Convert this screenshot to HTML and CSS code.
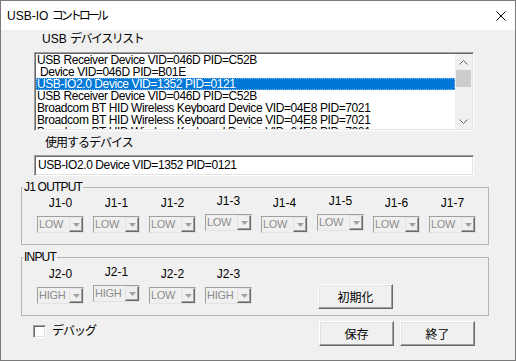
FILE: index.html
```html
<!DOCTYPE html>
<html lang="ja">
<head>
    <meta charset="UTF-8">
    <title>USB-IO コントロール</title>
    <link rel="stylesheet" href="styles.css">
</head>
<body>
    <div class="window">
        <div class="titlebar">
            <span class="title">USB-IO <span class="kana">コントロール</span></span>
            <svg class="close" width="10" height="10" viewBox="0 0 10 10">
                <path d="M0.5 0.5 L9.5 9.5 M9.5 0.5 L0.5 9.5" stroke="#000" stroke-width="1" fill="none"/>
            </svg>
        </div>

        <div class="client">
            <div class="caption caption-list">USB <span class="kana">デバイスリスト</span></div>
            <div class="listbox">
                <ul class="items">
                    <li>USB Receiver Device VID=046D PID=C52B</li>
                    <li>&nbsp;Device VID=046D PID=B01E</li>
                    <li class="selected">USB-IO2.0 Device VID=1352 PID=0121</li>
                    <li>USB Receiver Device VID=046D PID=C52B</li>
                    <li>Broadcom BT HID Wireless Keyboard Device VID=04E8 PID=7021</li>
                    <li>Broadcom BT HID Wireless Keyboard Device VID=04E8 PID=7021</li>
                    <li>Broadcom BT HID Wireless Keyboard Device VID=04E8 PID=7021</li>
                </ul>
                <div class="scrollbar">
                    <span class="arrow">
                        <svg width="9" height="5" viewBox="0 0 9 5"><path d="M0.5 4.5 L4.5 0.5 L8.5 4.5" stroke="#606060" fill="none"/></svg>
                    </span>
                    <span class="thumb"></span>
                    <span class="track"></span>
                    <span class="arrow">
                        <svg width="9" height="5" viewBox="0 0 9 5"><path d="M0.5 0.5 L4.5 4.5 L8.5 0.5" stroke="#606060" fill="none"/></svg>
                    </span>
                </div>
            </div>

            <div class="caption caption-device kana">使用するデバイス</div>
            <div class="textbox">USB-IO2.0 Device VID=1352 PID=0121</div>

            <fieldset class="group group-output">
                <legend>J1 OUTPUT</legend>
                <div class="ports">
                    <div class="port"><span class="port-name">J1-0</span><div class="combo"><span class="combo-value">LOW</span><span class="combo-btn"><svg width="7" height="4" viewBox="0 0 7 4"><path d="M0 0 H7 L3.5 4 Z" fill="#a0a0a0"/></svg></span></div></div>
                    <div class="port"><span class="port-name">J1-1</span><div class="combo"><span class="combo-value">LOW</span><span class="combo-btn"><svg width="7" height="4" viewBox="0 0 7 4"><path d="M0 0 H7 L3.5 4 Z" fill="#a0a0a0"/></svg></span></div></div>
                    <div class="port"><span class="port-name">J1-2</span><div class="combo"><span class="combo-value">LOW</span><span class="combo-btn"><svg width="7" height="4" viewBox="0 0 7 4"><path d="M0 0 H7 L3.5 4 Z" fill="#a0a0a0"/></svg></span></div></div>
                    <div class="port raised"><span class="port-name">J1-3</span><div class="combo"><span class="combo-value">LOW</span><span class="combo-btn"><svg width="7" height="4" viewBox="0 0 7 4"><path d="M0 0 H7 L3.5 4 Z" fill="#a0a0a0"/></svg></span></div></div>
                    <div class="port"><span class="port-name">J1-4</span><div class="combo"><span class="combo-value">LOW</span><span class="combo-btn"><svg width="7" height="4" viewBox="0 0 7 4"><path d="M0 0 H7 L3.5 4 Z" fill="#a0a0a0"/></svg></span></div></div>
                    <div class="port raised"><span class="port-name">J1-5</span><div class="combo"><span class="combo-value">LOW</span><span class="combo-btn"><svg width="7" height="4" viewBox="0 0 7 4"><path d="M0 0 H7 L3.5 4 Z" fill="#a0a0a0"/></svg></span></div></div>
                    <div class="port"><span class="port-name">J1-6</span><div class="combo"><span class="combo-value">LOW</span><span class="combo-btn"><svg width="7" height="4" viewBox="0 0 7 4"><path d="M0 0 H7 L3.5 4 Z" fill="#a0a0a0"/></svg></span></div></div>
                    <div class="port"><span class="port-name">J1-7</span><div class="combo"><span class="combo-value">LOW</span><span class="combo-btn"><svg width="7" height="4" viewBox="0 0 7 4"><path d="M0 0 H7 L3.5 4 Z" fill="#a0a0a0"/></svg></span></div></div>
                </div>
            </fieldset>

            <fieldset class="group group-input">
                <legend>INPUT</legend>
                <div class="ports">
                    <div class="port"><span class="port-name">J2-0</span><div class="combo"><span class="combo-value">HIGH</span><span class="combo-btn"><svg width="7" height="4" viewBox="0 0 7 4"><path d="M0 0 H7 L3.5 4 Z" fill="#a0a0a0"/></svg></span></div></div>
                    <div class="port raised"><span class="port-name">J2-1</span><div class="combo"><span class="combo-value">HIGH</span><span class="combo-btn"><svg width="7" height="4" viewBox="0 0 7 4"><path d="M0 0 H7 L3.5 4 Z" fill="#a0a0a0"/></svg></span></div></div>
                    <div class="port"><span class="port-name">J2-2</span><div class="combo"><span class="combo-value">LOW</span><span class="combo-btn"><svg width="7" height="4" viewBox="0 0 7 4"><path d="M0 0 H7 L3.5 4 Z" fill="#a0a0a0"/></svg></span></div></div>
                    <div class="port"><span class="port-name">J2-3</span><div class="combo"><span class="combo-value">HIGH</span><span class="combo-btn"><svg width="7" height="4" viewBox="0 0 7 4"><path d="M0 0 H7 L3.5 4 Z" fill="#a0a0a0"/></svg></span></div></div>
                    <button class="btn btn-reset">初期化</button>
                </div>
            </fieldset>

            <div class="footer">
                <label class="check"><span class="box"></span><span class="kana">デバッグ</span></label>
                <div class="actions">
                    <button class="btn">保存</button>
                    <button class="btn">終了</button>
                </div>
            </div>
        </div>
    </div>
</body>
</html>
```

FILE: styles.css
```css
body {
    margin: 0;
    font-family: "Liberation Sans", "Noto Sans CJK JP", sans-serif;
    font-size: 12px;
    color: #000;
    background: #fff;
}
/* the dialog font has narrow kana, Noto's are full width */
.kana { letter-spacing: -1.5px; }
.window {
    width: 516px;
    height: 361px;
    box-sizing: border-box;
    border: 1px solid #7a7a7a;
    background: #f0f0f0;
    display: flex;
    flex-direction: column;
}
.titlebar {
    height: 29px;
    flex-shrink: 0;
    background: #fff;
    display: flex;
    align-items: center;
    padding-left: 6px;
    line-height: 14px;
}
.title .kana { letter-spacing: -3px; }
.close {
    margin-left: auto;
    margin-right: 9px;
}
.client {
    display: flex;
    flex-direction: column;
    align-items: flex-start;
}
.caption {
    line-height: 14px;
}
.caption-list { margin: 2px 0 0 41px; }
.caption-device { margin: 5px 0 0 44px; letter-spacing: -1px; }

/* sunken controls */
.listbox,
.textbox {
    box-sizing: border-box;
    width: 440px;
    margin-left: 33px;
    background: #fff;
    border: 1px solid;
    border-color: #a0a0a0 #fff #fff #a0a0a0;
    box-shadow: inset 1px 1px 0 #696969, inset -1px -1px 0 #e3e3e3;
    letter-spacing: -0.4px;
}
.listbox {
    height: 79px;
    margin-top: 6px;
    padding: 1px;
    display: flex;
    overflow: hidden;
}
.items {
    list-style: none;
    margin: 0;
    padding: 0;
    flex: 1;
    overflow: hidden;
}
.items li {
    height: 12px;
    line-height: 12px;
    padding-left: 1px;
    white-space: nowrap;
    overflow: hidden;
}
.items li.selected {
    background: #0078d7;
    color: #fff;
    outline: 1px dotted #7fb4ea;
    outline-offset: -1px;
}
.scrollbar {
    width: 17px;
    display: flex;
    flex-direction: column;
    background: #f0f0f0;
}
.arrow {
    height: 16px;
    display: flex;
    align-items: center;
    justify-content: center;
}
.thumb {
    height: 17px;
    background: #cdcdcd;
    margin: 0 1px;
}
.track { flex: 1; }

.textbox {
    height: 21px;
    margin-top: 5px;
    padding: 2px 3px;
    line-height: 15px;
}

/* group boxes */
.group {
    box-sizing: border-box;
    width: 468px;
    margin: 0 0 0 20px;
    padding: 0;
    border: 1px solid #b4b4b4;
    min-width: 0;
}
.group legend {
    margin-left: 1px;
    padding: 0 1px;
    line-height: 14px;
    letter-spacing: -0.8px;
}
.group-output { margin-top: 4px; }
.group-output .ports { padding: 2px 0 11px 15px; }
.group-input { margin-top: 5px; }
.group-input .ports { padding: 3px 0 6px 15px; }

.ports {
    display: flex;
    align-items: flex-start;
    gap: 9px;
}
.port {
    width: 47px;
    display: flex;
    flex-direction: column;
    align-items: center;
    gap: 6px;
}
.port.raised { margin-top: -2px; }
.port-name { line-height: 14px; }
.combo {
    box-sizing: border-box;
    width: 47px;
    height: 17px;
    display: flex;
    border: 1px solid;
    border-color: #a0a0a0 #e3e3e3 #e3e3e3 #a0a0a0;
    background: #f0f0f0;
}
.combo-value {
    flex: 1;
    padding-left: 1px;
    font-size: 11px;
    line-height: 15px;
    letter-spacing: -0.3px;
    color: #8c8c8c;
    white-space: nowrap;
    overflow: hidden;
}
.combo-btn {
    box-sizing: border-box;
    width: 14px;
    display: flex;
    align-items: center;
    justify-content: center;
    border: 1px solid;
    border-color: #e3e3e3 #696969 #696969 #e3e3e3;
    box-shadow: inset -1px -1px 0 #a0a0a0;
}

/* buttons */
.btn {
    box-sizing: border-box;
    width: 75px;
    height: 25px;
    padding: 0;
    font: inherit;
    color: #000;
    background: #f0f0f0;
    border: 1px solid;
    border-color: #fff #696969 #696969 #fff;
    box-shadow: inset -1px -1px 0 #a0a0a0, inset 1px 1px 0 #e3e3e3;
}
.btn-reset { margin: 17px 0 0 57px; }

.footer {
    align-self: stretch;
    display: flex;
    align-items: flex-start;
    margin-top: 5px;
}
.check {
    display: flex;
    align-items: center;
    gap: 6px;
    margin: 3px 0 0 32px;
    line-height: 14px;
}
.check .kana { letter-spacing: -1px; }
.check .box {
    box-sizing: border-box;
    width: 13px;
    height: 13px;
    background: #fff;
    border: 1px solid;
    border-color: #a0a0a0 #fff #fff #a0a0a0;
    box-shadow: inset 1px 1px 0 #696969, inset -1px -1px 0 #e3e3e3;
}
.actions {
    margin-left: auto;
    margin-right: 40px;
    display: flex;
    gap: 6px;
}
```
